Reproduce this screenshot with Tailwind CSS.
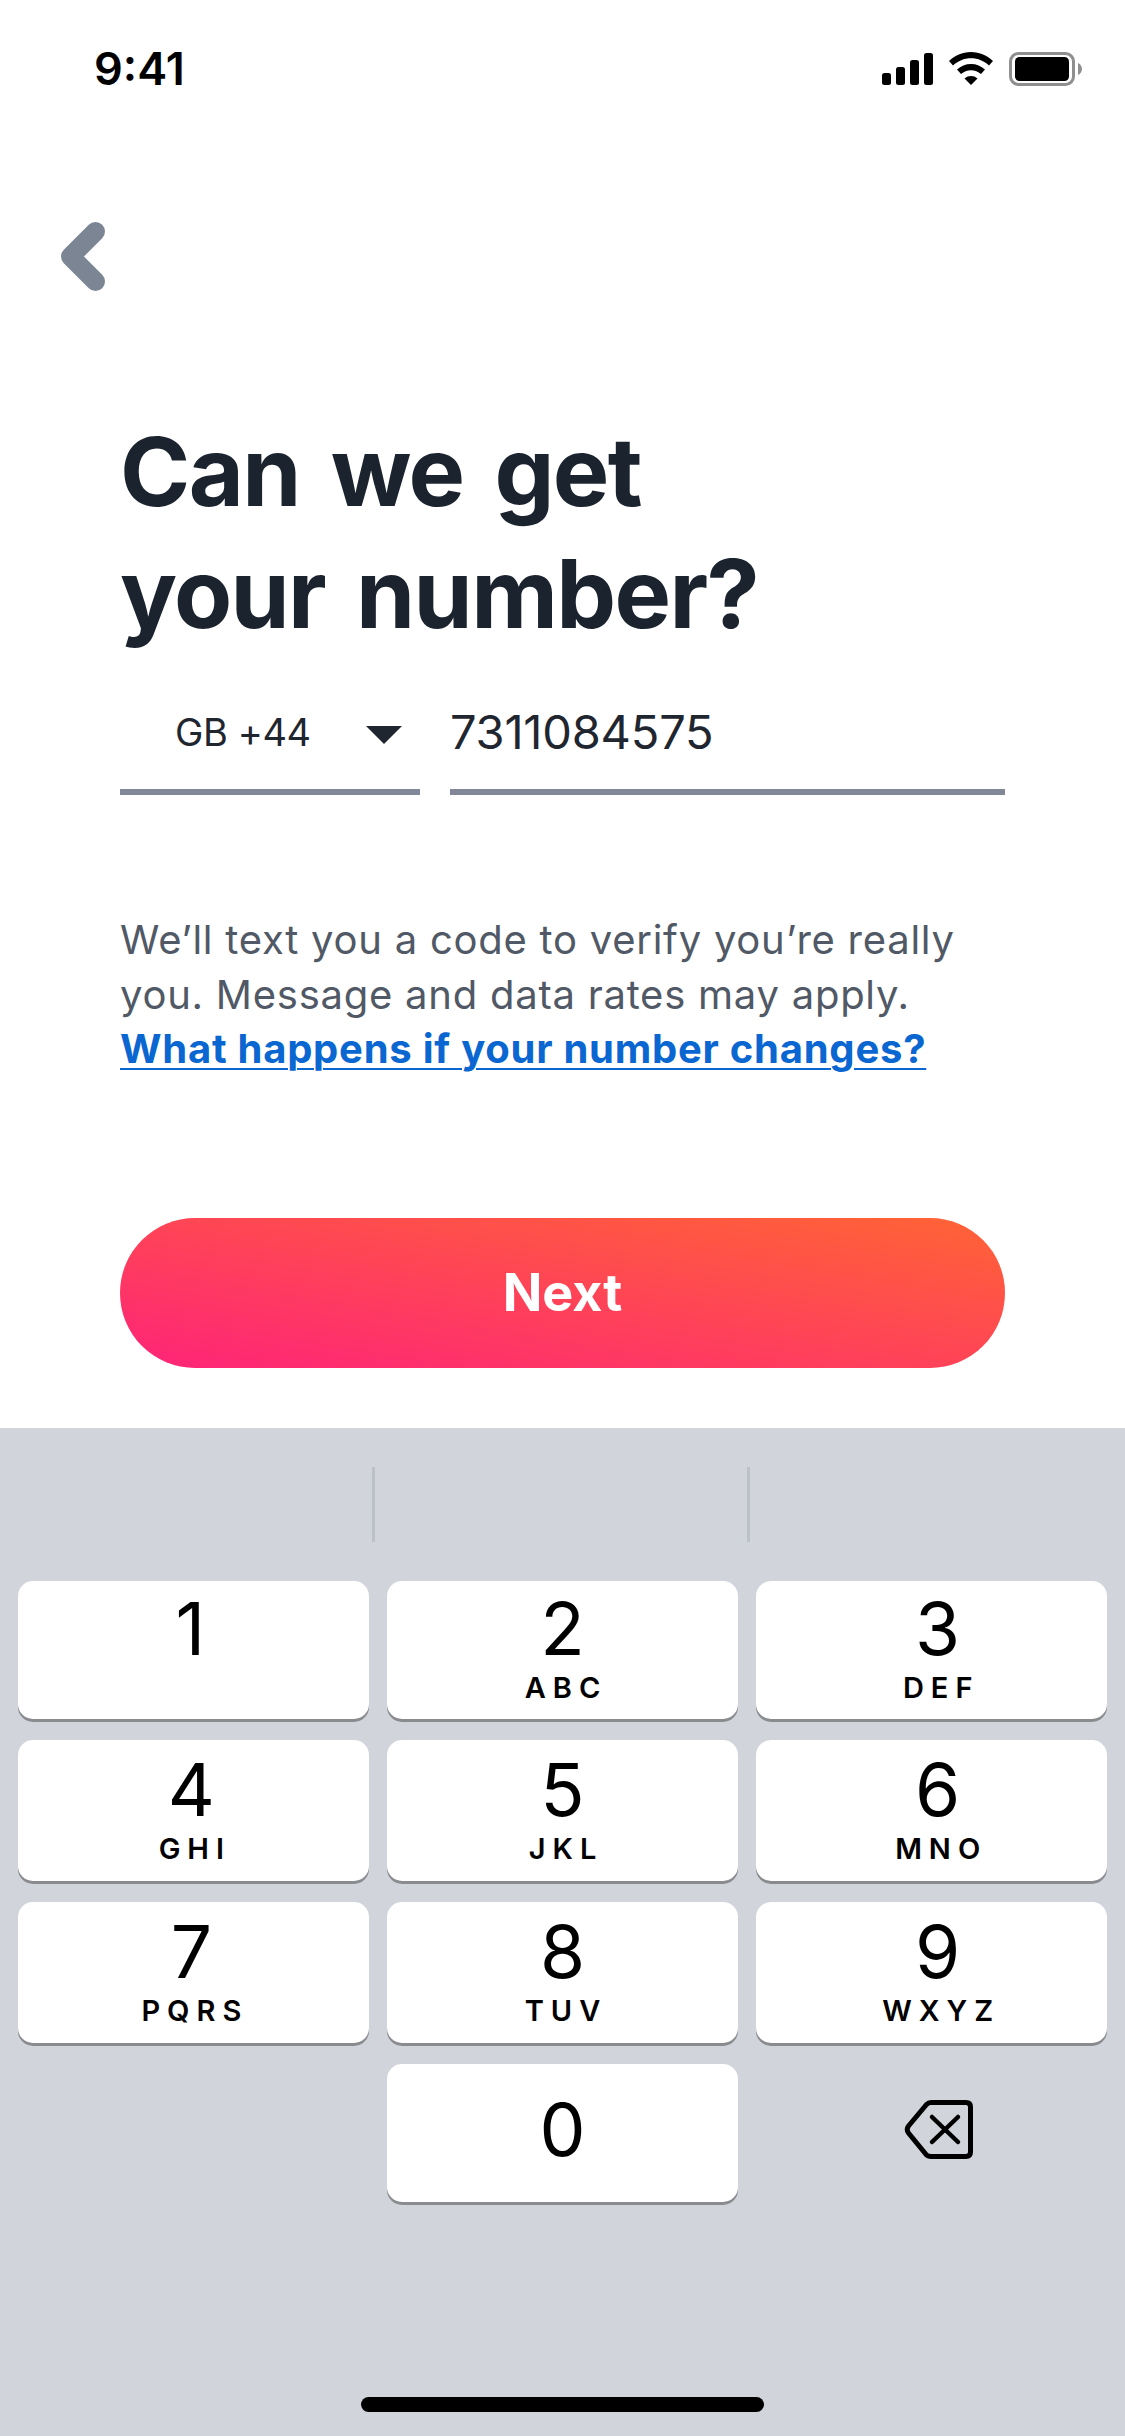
<!DOCTYPE html>
<html lang="en">
<head>
    <meta charset="UTF-8">
    <meta name="viewport" content="width=device-width, initial-scale=1.0">
    <title>Can we get your number?</title>
    <script src="https://cdn.jsdelivr.net/npm/@tailwindcss/browser@4"></script>
</head>
<body class="bg-white font-['Inter',sans-serif]">

<div class="w-[1125px] h-[2436px] flex flex-col overflow-hidden">
    <!-- status bar -->
    <div class="h-[222px] pt-[52px] pl-[94px] flex items-start shrink-0">
        <span class="text-[45px] leading-[34px] font-semibold text-black">9:41</span>
        <svg class="ml-auto mr-[43px]" width="200" height="34" viewBox="0 0 200 34">
            <rect x="0" y="21" width="9" height="12" rx="2.5" fill="#000"/>
            <rect x="14" y="15" width="9" height="18" rx="2.5" fill="#000"/>
            <rect x="28" y="8" width="9" height="25" rx="2.5" fill="#000"/>
            <rect x="42" y="1" width="9" height="32" rx="2.5" fill="#000"/>
            <g transform="translate(67 0)" fill="#000">
                <path d="M22 0C13 0 6 3.5 0 9L4 13.5C9 9 15 6.3 22 6.3C29 6.3 35 9 40 13.5L44 9C38 3.5 31 0 22 0Z"/>
                <path d="M22 12C16.5 12 12 14 8 17.5L12 22C15 19.5 18 18.2 22 18.2C26 18.2 29 19.5 32 22L36 17.5C32 14 27.5 12 22 12Z"/>
                <path d="M22 24C19.5 24 17.5 24.8 15.5 26.5L22 33L28.5 26.5C26.5 24.8 24.5 24 22 24Z"/>
            </g>
            <rect x="128.5" y="1.5" width="63" height="31" rx="8" fill="none" stroke="#8f8f8f" stroke-width="3"/>
            <rect x="133" y="5" width="54" height="24" rx="4.5" fill="#000"/>
            <path d="M196 11C198.500 12 200 14.500 200 17C200 19.500 198.500 22 196 23Z" fill="#8f8f8f"/>
        </svg>
    </div>

    <!-- back -->
    <div class="pl-[61px] h-[69px] shrink-0">
        <svg width="44" height="69" viewBox="0 0 44 69" fill="none">
            <path d="M34.500 9.500L9.500 34.500L34.500 59.500" stroke="#7c8594" stroke-width="19" stroke-linecap="round" stroke-linejoin="round"/>
        </svg>
    </div>

    <div class="px-[120px] shrink-0">
        <h1 class="mt-[120px] text-[95px] leading-[122px] font-bold tracking-[-1.6px] [word-spacing:10px] text-[#1b232e]">Can we get<br>your number?</h1>

        <div class="mt-[41px] flex gap-[30px] text-[#1f2630]">
            <div class="w-[300px] h-[99px] border-b-[6px] border-[#828797] flex items-center pl-[55px] pb-[16px]">
                <span class="mb-[6px] text-[38px] leading-none tracking-[-0.4px]">GB +44</span>
                <svg class="ml-[55px]" width="36" height="18" viewBox="0 0 36 18"><path d="M0 0H36L18 18Z" fill="#1f2630"/></svg>
            </div>
            <div class="w-[555px] h-[99px] border-b-[6px] border-[#828797] flex items-center pb-[16px]">
                <span class="mb-[6px] text-[47px] leading-none tracking-[-0.2px]">7311084575</span>
            </div>
        </div>

        <p class="mt-[118px] text-[40px] leading-[54.5px] tracking-[0.75px] text-[#505965]">
            We’ll text you a code to verify you’re really<br>
            you. Message and data rates may apply.<br>
            <a href="#" class="font-bold text-[#0a66d0] underline decoration-2 underline-offset-[5px]">What happens if your number changes?</a>
        </p>

        <button class="mt-[141px] w-[885px] h-[150px] rounded-full bg-[linear-gradient(to_top_right,#fe2478,#ff6435)] text-white text-[52px] font-bold">Next</button>
    </div>

    <!-- keyboard -->
    <div class="mt-[60px] flex-1 bg-[#d1d4db] relative text-black">
        <div class="flex pt-[39px]">
            <div class="ml-[372px] w-[3px] h-[75px] bg-[#bcc0c8]"></div>
            <div class="ml-[372px] w-[3px] h-[75px] bg-[#bcc0c8]"></div>
        </div>

        <div class="mt-[39px] px-[18px] grid grid-cols-3 gap-x-[18.5px] gap-y-[21px] grid-rows-[138px_141px_141px_138px]">
            <div class="bg-white rounded-[15px] shadow-[0_3px_0_#898b8f] flex flex-col items-center pt-[21px] pr-[6px]">
                <span class="text-[73px] leading-[54px]">1</span>
            </div>
            <div class="bg-white rounded-[15px] shadow-[0_3px_0_#898b8f] flex flex-col items-center pt-[21px]">
                <span class="text-[73px] leading-[54px]">2</span>
                <span class="mt-[21px] pl-[7px] text-[29px] leading-[22px] font-semibold tracking-[7px]">ABC</span>
            </div>
            <div class="bg-white rounded-[15px] shadow-[0_3px_0_#898b8f] flex flex-col items-center pt-[21px] pl-[12px]">
                <span class="text-[73px] leading-[54px]">3</span>
                <span class="mt-[21px] pl-[7px] text-[29px] leading-[22px] font-semibold tracking-[7px]">DEF</span>
            </div>

            <div class="bg-white rounded-[15px] shadow-[0_3px_0_#898b8f] flex flex-col items-center pt-[23px] pr-[4px]">
                <span class="text-[73px] leading-[54px]">4</span>
                <span class="mt-[21px] pl-[7px] text-[29px] leading-[22px] font-semibold tracking-[7px]">GHI</span>
            </div>
            <div class="bg-white rounded-[15px] shadow-[0_3px_0_#898b8f] flex flex-col items-center pt-[23px]">
                <span class="text-[73px] leading-[54px]">5</span>
                <span class="mt-[21px] pl-[7px] text-[29px] leading-[22px] font-semibold tracking-[7px]">JKL</span>
            </div>
            <div class="bg-white rounded-[15px] shadow-[0_3px_0_#898b8f] flex flex-col items-center pt-[23px] pl-[12px]">
                <span class="text-[73px] leading-[54px]">6</span>
                <span class="mt-[21px] pl-[7px] text-[29px] leading-[22px] font-semibold tracking-[7px]">MNO</span>
            </div>

            <div class="bg-white rounded-[15px] shadow-[0_3px_0_#898b8f] flex flex-col items-center pt-[23px] pr-[4px]">
                <span class="text-[73px] leading-[54px]">7</span>
                <span class="mt-[21px] pl-[7px] text-[29px] leading-[22px] font-semibold tracking-[7px]">PQRS</span>
            </div>
            <div class="bg-white rounded-[15px] shadow-[0_3px_0_#898b8f] flex flex-col items-center pt-[23px]">
                <span class="text-[73px] leading-[54px]">8</span>
                <span class="mt-[21px] pl-[7px] text-[29px] leading-[22px] font-semibold tracking-[7px]">TUV</span>
            </div>
            <div class="bg-white rounded-[15px] shadow-[0_3px_0_#898b8f] flex flex-col items-center pt-[23px] pl-[12px]">
                <span class="text-[73px] leading-[54px]">9</span>
                <span class="mt-[21px] pl-[7px] text-[29px] leading-[22px] font-semibold tracking-[7px]">WXYZ</span>
            </div>

            <div></div>
            <div class="bg-white rounded-[15px] shadow-[0_3px_0_#898b8f] flex flex-col items-center pt-[39px]">
                <span class="text-[73px] leading-[54px]">0</span>
            </div>
            <div class="pl-[148px] pt-[36px]">
                <svg width="69" height="59" viewBox="0 0 69 59" fill="none">
                    <path d="M27 2.500H62Q66.500 2.500 66.500 7V52Q66.500 56.500 62 56.500H27Q24.500 56.500 22.500 55L4.500 33Q2 29.500 4.500 26L22.500 4.500Q24.500 2.500 27 2.500Z" stroke="#000" stroke-width="5" stroke-linejoin="round"/>
                    <path d="M28 17L54 42M54 17L28 42" stroke="#000" stroke-width="4.500" stroke-linecap="round"/>
                </svg>
            </div>
        </div>

        <!-- home indicator -->
        <div class="absolute left-[361px] bottom-[24px] w-[403px] h-[15px] rounded-full bg-black"></div>
    </div>
</div>

</body>
</html>
